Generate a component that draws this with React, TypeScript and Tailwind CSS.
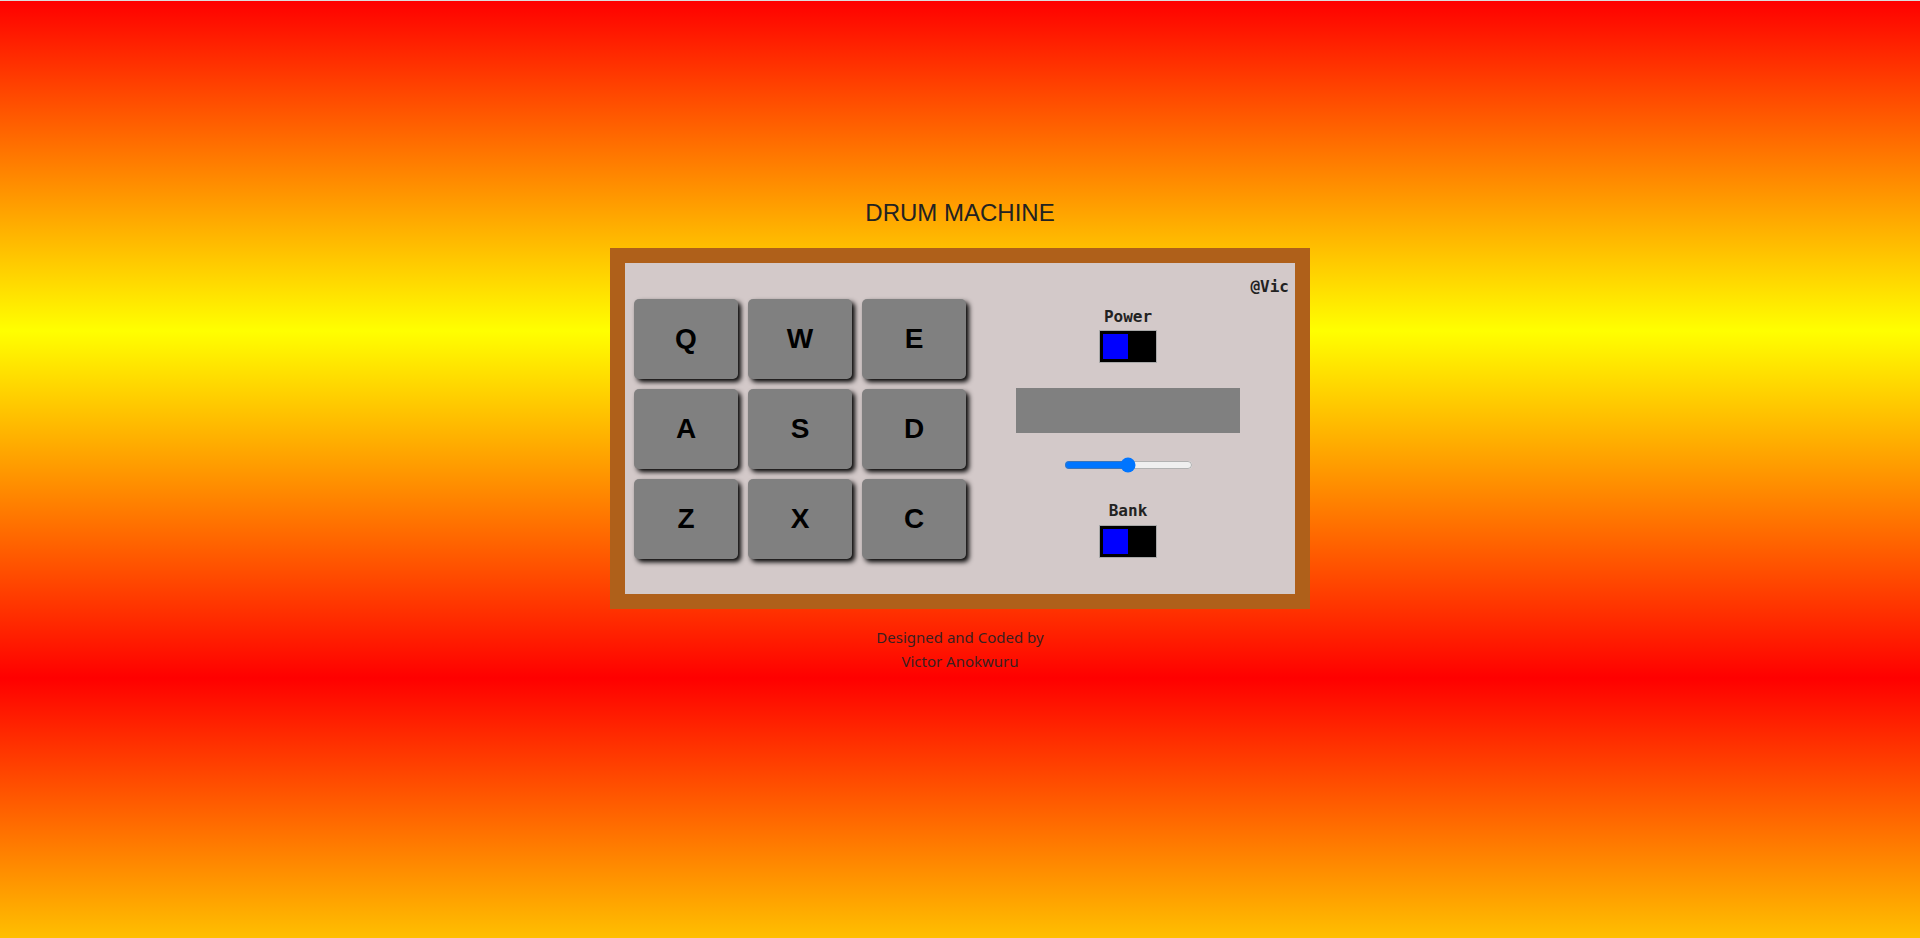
import React, { useState } from 'react';

const KEYS = ['Q', 'W', 'E', 'A', 'S', 'D', 'Z', 'X', 'C'];

const Toggle: React.FC<{ on: boolean; onClick: () => void }> = ({ on, onClick }) => (
    <div
        onClick={onClick}
        className={`w-[58px] h-[33px] border border-[#a8a8a8] bg-black p-[3px] flex cursor-pointer ${on ? 'justify-start' : 'justify-end'}`}
    >
        <div className="w-[25px] h-[25px] bg-[#0000ff]" />
    </div>
);

export default function App() {
    const [power, setPower] = useState(true);
    const [bank, setBank] = useState(true);
    const [volume, setVolume] = useState(50);

    return (
        <div className="min-h-screen w-full border-t border-[#dcdcdc] bg-[linear-gradient(#ff0000_0px,#ffff00_330px,#ff0000_677px,#ffff00_1024px)] flex flex-col items-center pt-[198px]">
            <h1 className="font-['Liberation_Sans',Arial,sans-serif] text-[24px] leading-[28px] text-[#222]">
                DRUM MACHINE
            </h1>

            <div className="mt-[21px] w-[700px] border-[15px] border-[#af601a] bg-[#d3c9c9]">
                <div className="pt-[14px] pr-[6px] text-right font-['DejaVu_Sans_Mono',monospace] font-bold text-[16px] leading-[19px] text-[#222]">
                    @Vic
                </div>

                <div className="mt-[3px] pb-[35px] pl-[9px] flex items-start">
                    <div className="grid grid-cols-[104px_104px_104px] gap-[10px]">
                        {KEYS.map((k) => (
                            <div
                                key={k}
                                className="h-[80px] rounded-[5px] bg-[#808080] shadow-[3px_3px_5px_#000] flex items-center justify-center font-['Liberation_Sans',Arial,sans-serif] font-bold text-[28px] text-black cursor-pointer"
                            >
                                {k}
                            </div>
                        ))}
                    </div>

                    <div className="flex-1 flex flex-col items-center pt-[8px] pr-[5px] font-['DejaVu_Sans_Mono',monospace] font-bold text-[16px] leading-[19px] text-[#222]">
                        <p>Power</p>
                        <div className="mt-[4px]">
                            <Toggle on={power} onClick={() => setPower(!power)} />
                        </div>
                        <div className="mt-[25px] w-[224px] h-[45px] bg-[#808080]" />
                        <div className="mt-[22px] h-[20px] flex items-center">
                            <input
                                type="range"
                                min={0}
                                max={100}
                                value={volume}
                                onChange={(e) => setVolume(Number(e.target.value))}
                                className="w-[129px]"
                            />
                        </div>
                        <p className="mt-[26px]">Bank</p>
                        <div className="mt-[5px]">
                            <Toggle on={bank} onClick={() => setBank(!bank)} />
                        </div>
                    </div>
                </div>
            </div>

            <div className="mt-[16px] text-center font-['Noto_Sans',sans-serif] text-[15px] leading-[24px] text-[#3a2020]">
                <p>Designed and Coded by</p>
                <p>Victor Anokwuru</p>
            </div>
        </div>
    );
}
